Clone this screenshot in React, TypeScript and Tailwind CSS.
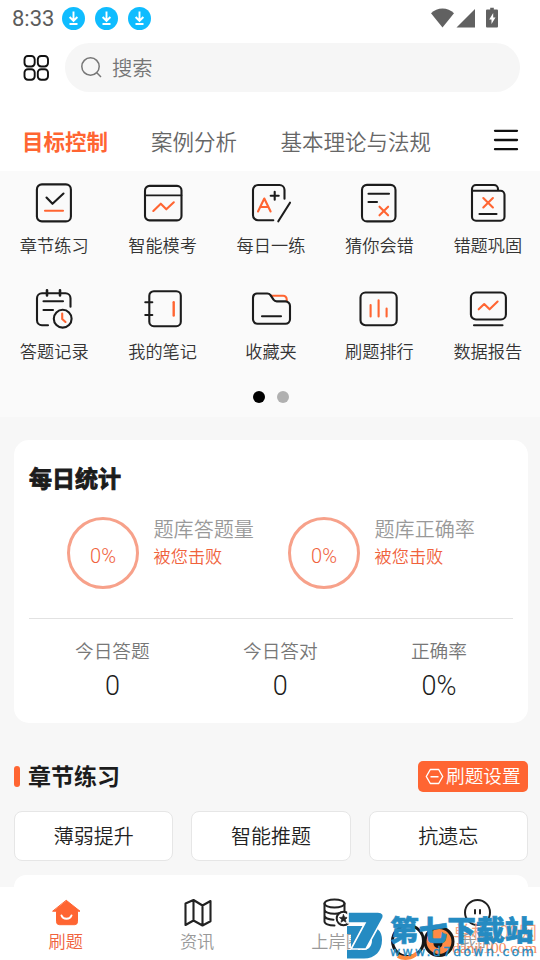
import type { ReactNode } from 'react';

const ORANGE = '#ff6532';

const DownloadDot = () => (
    <svg className="size-[23px]" viewBox="0 0 23 23" fill="none">
        <circle cx="11.5" cy="11.5" r="11.5" fill="#0fbcff" />
        <path d="M11.5 4.5v9M7.6 10l3.9 3.8 3.9-3.8M7.5 17h8" stroke="#fff" strokeWidth="1.9" />
    </svg>
);

const StatusBar = () => (
    <div className="flex h-[37px] items-center pl-3">
        <span className="w-[50px] font-['Roboto'] text-[22px] leading-[37px] font-normal text-[#5c5c5c]">8:33</span>
        <div className="flex gap-[10px]">
            <DownloadDot />
            <DownloadDot />
            <DownloadDot />
        </div>
        <svg className="ml-auto mr-10 mb-0.5 h-[22px] w-[70px]" viewBox="0 0 70 22" fill="#616161">
            <path d="M1 6.2C7-.1 18-.1 24 6.2L12.5 20.5z" />
            <path d="M45 2v18.5H26.5z" />
            <path d="M60.2.7h3.6v1.8h2.9c.8 0 1.3.5 1.3 1.3v15.4c0 .8-.5 1.3-1.3 1.3h-9.4c-.8 0-1.3-.5-1.3-1.3V3.8c0-.8.5-1.3 1.3-1.3h2.9z" />
            <path d="M63.2 6l-4 6.5h2.3V17l4-6.5h-2.3z" fill="#fff" />
        </svg>
    </div>
);

const SearchRow = () => (
    <div className="flex items-center px-5 pt-1.5">
        <svg className="ml-[3px] size-[27px]" viewBox="0 0 27 27" fill="none" stroke="#111" strokeWidth="1.9">
            <rect x="1.5" y="2" width="10.2" height="10.5" rx="3.4" />
            <rect x="14.8" y="2" width="10.2" height="10.5" rx="3.4" />
            <rect x="1.5" y="15.2" width="10.2" height="10.5" rx="3.4" />
            <rect x="14.8" y="15.2" width="10.2" height="10.5" rx="3.4" />
        </svg>
        <div className="ml-[15px] flex h-[49px] flex-1 items-center rounded-full bg-[#f6f6f6] pl-4">
            <svg className="size-[21px]" viewBox="0 0 21 21" fill="none" stroke="#777" strokeWidth="1.5">
                <circle cx="9.5" cy="9.5" r="8.7" />
                <path d="M15.8 15.8l4.2 4.2" />
            </svg>
            <span className="ml-[10px] text-[20.3px] text-[#757575]">搜索</span>
        </div>
    </div>
);

const CategoryTabs = () => (
    <div className="flex h-[79px] items-center pl-[22px] pt-[19px] text-[21.5px] text-[#666]">
        <span className="font-bold text-[#ff6532]">目标控制</span>
        <span className="ml-[43px]">案例分析</span>
        <span className="ml-[43.5px]">基本理论与法规</span>
        <svg className="ml-auto mr-[21px] mb-[3px] h-[22px] w-[26px]" viewBox="0 0 26 22" stroke="#111" strokeWidth="2.3" strokeLinecap="round">
            <path d="M2 1.8h22M2 11h22M2 20.2h22" />
        </svg>
    </div>
);

const features: { label: string; icon: ReactNode }[] = [
    {
        label: '章节练习',
        icon: (
            <>
                <rect x="2.9" y="1.4" width="34" height="37" rx="5" />
                <path d="M12.5 14.5l6 6.3L29.5 10.5" />
                <path d="M11 27.7h18" stroke={ORANGE} />
            </>
        ),
    },
    {
        label: '智能模考',
        icon: (
            <>
                <rect x="2" y="2.9" width="36.5" height="34.5" rx="4.5" />
                <path d="M2 12.3h36.5" strokeWidth="1.7" />
                <path d="M10.3 28l7.5-7.3 5.5 5.6 7.5-7" stroke={ORANGE} />
            </>
        ),
    },
    {
        label: '每日一练',
        icon: (
            <>
                <path d="M22.3 37.2H7a5 5 0 0 1-5-5V7a5 5 0 0 1 5-5h21.5a5 5 0 0 1 5 5v8.7" />
                <path d="M19.7 12.7h8M23.7 8.7v8M39 19.7L27.3 38.3" />
                <path d="M7 28.5l6.3-13 6.3 13M9.5 24h7.5" stroke={ORANGE} />
            </>
        ),
    },
    {
        label: '猜你会错',
        icon: (
            <>
                <rect x="3" y="1.9" width="33.5" height="36.5" rx="5" />
                <path d="M9.5 10.7h20.5M9.5 19h8.5" />
                <path d="M20.5 23.7l8.6 8.6M29.1 23.7l-8.6 8.6" stroke={ORANGE} />
            </>
        ),
    },
    {
        label: '错题巩固',
        icon: (
            <>
                <path d="M4 12V6a4 4 0 0 1 4-4h18a4 4 0 0 1 4 4v1.7M4 7.7h28.5a4 4 0 0 1 4 4v22a4 4 0 0 1-4 4H8a4 4 0 0 1-4-4V7.7" />
                <path d="M11.5 31h17" />
                <path d="M15.3 15l9.6 9.5M24.9 15l-9.6 9.5" stroke={ORANGE} />
            </>
        ),
    },
    {
        label: '答题记录',
        icon: (
            <>
                <path d="M14 36.3H8a5 5 0 0 1-5-5V9.3a5 5 0 0 1 5-5h23.5a5 5 0 0 1 5 5v8.4" />
                <path d="M13 1.2v5.3M26 1.2v5.3" strokeWidth="2.6" />
                <path d="M9.5 12.3h19.5M9.5 21H19" />
                <circle cx="28.7" cy="29.7" r="8.9" />
                <path d="M28.2 24.5v5.5l3.3 3" stroke={ORANGE} />
            </>
        ),
    },
    {
        label: '我的笔记',
        icon: (
            <>
                <rect x="6.3" y="2.2" width="31.5" height="35" rx="4.5" />
                <path d="M2.3 13.3h7M2.3 26h7" />
                <path d="M30.7 13.3V26.5" stroke={ORANGE} strokeWidth="2.4" />
            </>
        ),
    },
    {
        label: '收藏夹',
        icon: (
            <>
                <path d="M20 6.7h12.2a3.5 3.5 0 0 1 3.5 3.5v1.5" stroke={ORANGE} />
                <path d="M6 4.5h10.2a4 4 0 0 1 3.3 1.7l3 4.5a4 4 0 0 0 3.3 1.7H34.5a4.500 4.500 0 0 1 4.500 4.500v13.4a4.5 4.5 0 0 1-4.5 4.5H6.5a4.5 4.5 0 0 1-4.5-4.5V9a4.5 4.5 0 0 1 4-4.5z" />
                <path d="M11 27.3h19" />
            </>
        ),
    },
    {
        label: '刷题排行',
        icon: (
            <>
                <rect x="1.5" y="3.5" width="36.2" height="32.7" rx="5" />
                <path d="M11.6 16v11.5M19.6 11.3v16.2M27.6 19.6v7.9" stroke={ORANGE} />
            </>
        ),
    },
    {
        label: '数据报告',
        icon: (
            <>
                <rect x="2.9" y="3.5" width="35" height="27" rx="5" />
                <path d="M6 36.3h28.5" />
                <path d="M10.7 20.3L16.2 15l5.4 5.3 8-7.8" stroke={ORANGE} />
            </>
        ),
    },
];

const FeatureGrid = () => (
    <div className="h-[246px] bg-[#fafafa] pt-3">
        <div className="-mr-0.5 grid grid-cols-5 gap-y-[18px]">
            {features.map(f => (
                <div key={f.label} className="flex h-[88px] flex-col items-center">
                    <svg
                        className="size-10 overflow-visible"
                        viewBox="0 0 40 40"
                        fill="none"
                        stroke="#1c1c1c"
                        strokeWidth="2.1"
                        strokeLinecap="round"
                        strokeLinejoin="round"
                    >
                        {f.icon}
                    </svg>
                    <span className="mt-[9px] text-[17.2px] leading-[26px] text-[#333]">{f.label}</span>
                </div>
            ))}
        </div>
        <div className="mt-[14px] flex justify-center gap-3 pl-0.5">
            <span className="size-3 rounded-full bg-black" />
            <span className="size-3 rounded-full bg-[#b0b0b0]" />
        </div>
    </div>
);

const Ring = ({ title }: { title: string }) => (
    <div className="flex w-[221px]">
        <div className="flex size-[72px] items-center justify-center rounded-full border-[3px] border-[#f7a18a] pt-[5px] font-['Roboto'] text-[20px] text-[#f0623c]">
            0%
        </div>
        <div className="ml-[14.5px]">
            <div className="mt-[-3px] text-[20.1px] leading-[29px] text-[#999]">{title}</div>
            <div className="text-[17.2px] leading-[26px] text-[#f0623c]">被您击败</div>
        </div>
    </div>
);

const Stat = ({ label, value }: { label: string; value: string }) => (
    <div className="flex flex-col items-center">
        <span className="text-[18.7px] leading-[28px] text-[#777]">{label}</span>
        <span className="mt-[5px] font-['Roboto'] text-[27px] leading-[34px] text-[#1c1c1c]">{value}</span>
    </div>
);

const DailyStats = () => (
    <div className="mx-3.5 mr-3 mt-[23px] h-[283px] rounded-[15px] bg-white px-[15px] pt-[19px]">
        <h2 className="text-[23px] leading-[36px] font-bold text-[#1c1c1c] [-webkit-text-stroke:0.9px_#1c1c1c]">每日统计</h2>
        <div className="mt-[22px] flex pl-[38px]">
            <Ring title="题库答题量" />
            <Ring title="题库正确率" />
        </div>
        <div className="mt-[29px] flex justify-between border-t border-[#e2e2e2] px-[46px] pt-[17px]">
            <Stat label="今日答题" value="0" />
            <Stat label="今日答对" value="0" />
            <Stat label="正确率" value="0%" />
        </div>
    </div>
);

const ChapterPractice = () => (
    <div className="mt-[38px] pl-3.5 pr-3">
        <div className="flex h-[31px] items-center">
            <span className="h-[21px] w-1.5 rounded-full bg-[#ff6532]" />
            <h2 className="ml-2 -mt-0.5 text-[23px] leading-[31px] font-bold text-[#1c1c1c]">章节练习</h2>
            <div className="ml-auto flex h-[31px] w-[110px] items-center rounded-[5px] bg-[#ff6532] pl-[7px] text-[18.7px] leading-[31px] text-white">
                <svg className="mr-[2px] size-[19px]" viewBox="0 0 19 19" fill="none" stroke="#fff" strokeWidth="1.4" strokeLinejoin="round">
                    <path d="M5.3 2.5h8.4l4 7-4 7H5.3l-4-7zM5.5 9.8h8" />
                </svg>
                <span className="-mt-[5px] whitespace-nowrap">刷题设置</span>
            </div>
        </div>
        <div className="mt-[19px] grid grid-cols-3 gap-[18px]">
            {['薄弱提升', '智能推题', '抗遗忘'].map(t => (
                <div key={t} className="flex h-[50px] items-center justify-center rounded-lg border border-[#e6e6e6] bg-white text-[20px] text-[#222]">
                    {t}
                </div>
            ))}
        </div>
        <div className="mt-3.5 h-[12px] rounded-t-[14px] bg-white" />
    </div>
);

const NavItem = ({ label, active, children }: { label: string; active?: boolean; children: ReactNode }) => (
    <div className="flex flex-col items-center pt-[10px]">
        <svg
            className="size-[30px] overflow-visible"
            viewBox="0 0 30 30"
            fill="none"
            stroke="#222"
            strokeWidth="2"
            strokeLinecap="round"
            strokeLinejoin="round"
        >
            {children}
        </svg>
        <span className={active ? 'mt-px text-[17.2px] leading-[26px] text-[#f0623c]' : 'mt-px text-[17.2px] leading-[26px] text-[#999]'}>
            {label}
        </span>
    </div>
);

const BottomNav = () => (
    <div className="flex h-[73px] gap-[97px] bg-white pl-[48.5px]">
        <NavItem label="刷题" active>
            <path d="M15.5 3.5L29 14.2h-2.5v10.5a3 3 0 0 1-3 3h-15a3 3 0 0 1-3-3V14.2H2z" fill={ORANGE} stroke={ORANGE} strokeWidth="1" />
            <path d="M10.5 18.5c1.6 4.3 8.4 4.3 10 0" stroke="#fff" strokeWidth="2" />
        </NavItem>
        <NavItem label="资讯">
            <path d="M3.5 6.5l8-3.5 9 5.5 8-4.5v20.3l-8 4.2-9-5-8 4.5zM11.5 3v20.5M20.5 8.5v20" strokeWidth="2.1" />
        </NavItem>
        <NavItem label="上岸圈">
            <ellipse cx="12.5" cy="6.5" rx="10" ry="4" />
            <path d="M2.5 6.5v18c0 2.2 4 4 10 4M22.5 6.5v8M2.5 12.5c0 2.5 4.5 4.3 10 4.3 2 0 4-.3 5.5-.8M2.5 18.5c0 2.3 4 4 9 4.2" />
            <circle cx="21.5" cy="21.5" r="6.8" fill="#fff" />
            <path d="M21.5 17.5l1.2 2.7 2.9.3-2.2 1.9.7 2.9-2.6-1.5-2.6 1.5.7-2.9-2.2-1.9 2.9-.3z" fill="#222" strokeWidth=".6" />
        </NavItem>
        <NavItem label="我的">
            <circle cx="15.5" cy="15.5" r="12.5" />
            <path d="M13 13v3.5M18 13v3.5" />
        </NavItem>
    </div>
);

const Watermark = () => (
    <div className="absolute bottom-0 left-[345px] h-[50px] w-[195px]">
        <svg className="absolute left-[45px] top-2 h-[42px] w-[66px]" viewBox="0 0 66 42" fill="none">
            <circle cx="18" cy="23" r="15.5" stroke="#171717" strokeWidth="3" />
            <path d="M8 38c5 3 14 3 19-3" stroke="#ff8a3d" strokeWidth="4" />
            <circle cx="49" cy="23.5" r="14" fill="#ff8a45" stroke="#171717" strokeWidth="3" />
            <circle cx="48" cy="25.5" r="4.5" fill="#171717" />
        </svg>
        <span className="absolute right-[3px] top-[11px] text-[18px] leading-[20px] whitespace-nowrap text-[#f9a27c]">单机100网</span>
        <span className="absolute right-[3px] top-[30px] font-['Liberation_Serif'] text-[15.5px] leading-[16px] font-normal text-[#f58b60]">danji100.com</span>
        <svg className="absolute left-[2px] top-[2px] h-[47px] w-[37px]" viewBox="0 0 37 47">
            <path
                d="M0 14h20c10 0 15 5 15 14 0 11-7 18.5-18 18.5H0V38h4V22H0zM11 24v14h5c6 0 9-4 9-10 0-3-2-4-5-4z"
                fill="#258bc2"
                fillRule="evenodd"
            />
            <path d="M1 0h30c5 0 6.5 3 4.5 7L19 37H4L18 11H1z" fill="#258bc2" stroke="#fff" strokeWidth="1.6" />
        </svg>
        <span className="absolute left-[45px] top-[1px] text-[28.7px] leading-[36px] font-black whitespace-nowrap text-[#258bc2] [-webkit-text-stroke:0.6px_#258bc2]">
            第七下载站
        </span>
        <span className="absolute left-[45px] top-[34px] font-['DejaVu_Sans'] text-[12.5px] leading-[16px] font-normal tracking-[2.3px] whitespace-nowrap text-[#258bc2] [-webkit-text-stroke:0.3px_#258bc2]">
            www.d7down.com
        </span>
    </div>
);

export default function App() {
    return (
        <div className="relative flex h-[960px] w-[540px] flex-col overflow-hidden bg-[#f7f7f7] font-['Noto_Sans_CJK_SC',sans-serif] font-[350]">
            <div className="h-[171px] shrink-0 bg-white">
                <StatusBar />
                <SearchRow />
                <CategoryTabs />
            </div>
            <FeatureGrid />
            <DailyStats />
            <ChapterPractice />
            <BottomNav />
            <Watermark />
        </div>
    );
}
